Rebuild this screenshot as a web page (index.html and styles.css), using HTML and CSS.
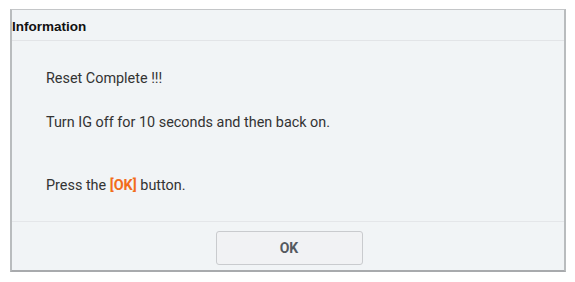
FILE: index.html
```html
<!DOCTYPE html>
<html>
<head>
<meta charset="utf-8">
<link rel="stylesheet" href="styles.css">
</head>
<body>
<div class="dialog">
  <div class="header">Information</div>
  <div class="content">
    <p class="line l1">Reset Complete !!!</p>
    <p class="line l2">Turn IG off for 10 seconds and then back on.</p>
    <p class="line l3">Press the <span class="hl">[OK]</span> button.</p>
  </div>
  <div class="footer">
    <button class="ok">OK</button>
  </div>
</div>
</body>
</html>
```
FILE: styles.css
```css
html, body { margin: 0; padding: 0; background: #ffffff; }
body { padding: 9px 0 0 10px; }
.dialog {
  width: 556px;
  height: 263px;
  background: #f1f4f6;
  border: 1px solid #c4c6c8;
  border-left: 2px solid #b9bcbe;
  border-bottom: 2px solid #a8aaad;
  border-right: 2px solid #b9bcbe;
  display: flex;
  flex-direction: column;
  box-sizing: border-box;
}
.header {
  height: 31px;
  box-sizing: border-box;
  border-bottom: 1px solid #e2e4e7;
  font-family: "Liberation Sans", Arial, sans-serif;
  font-weight: bold;
  font-size: 13.5px;
  color: #111;
  padding: 9px 0 0 0;
  line-height: 16px;
}
.content {
  flex: 1;
  box-sizing: border-box;
  border-bottom: 1px solid #e4e6e9;
  padding: 28px 0 0 34px;
  font-family: Roboto, "Liberation Sans", sans-serif;
  font-size: 14.4px;
  color: #333;
}
.line { margin: 0; line-height: 20px; }
.l2 { margin-top: 24px; }
.l3 { margin-top: 43px; }
.hl { color: #f26d1c; font-weight: bold; }
.footer {
  height: 48px;
  display: flex;
  justify-content: center;
  padding-top: 9px;
  box-sizing: border-box;
}
.ok {
  width: 147px;
  height: 34px;
  background: #f1f2f4;
  border: 1px solid #c9cbce;
  border-radius: 3px;
  font-family: Roboto, "Liberation Sans", sans-serif;
  font-weight: bold;
  font-size: 14px;
  color: #555a60;
  margin-left: 2px;
}
```
